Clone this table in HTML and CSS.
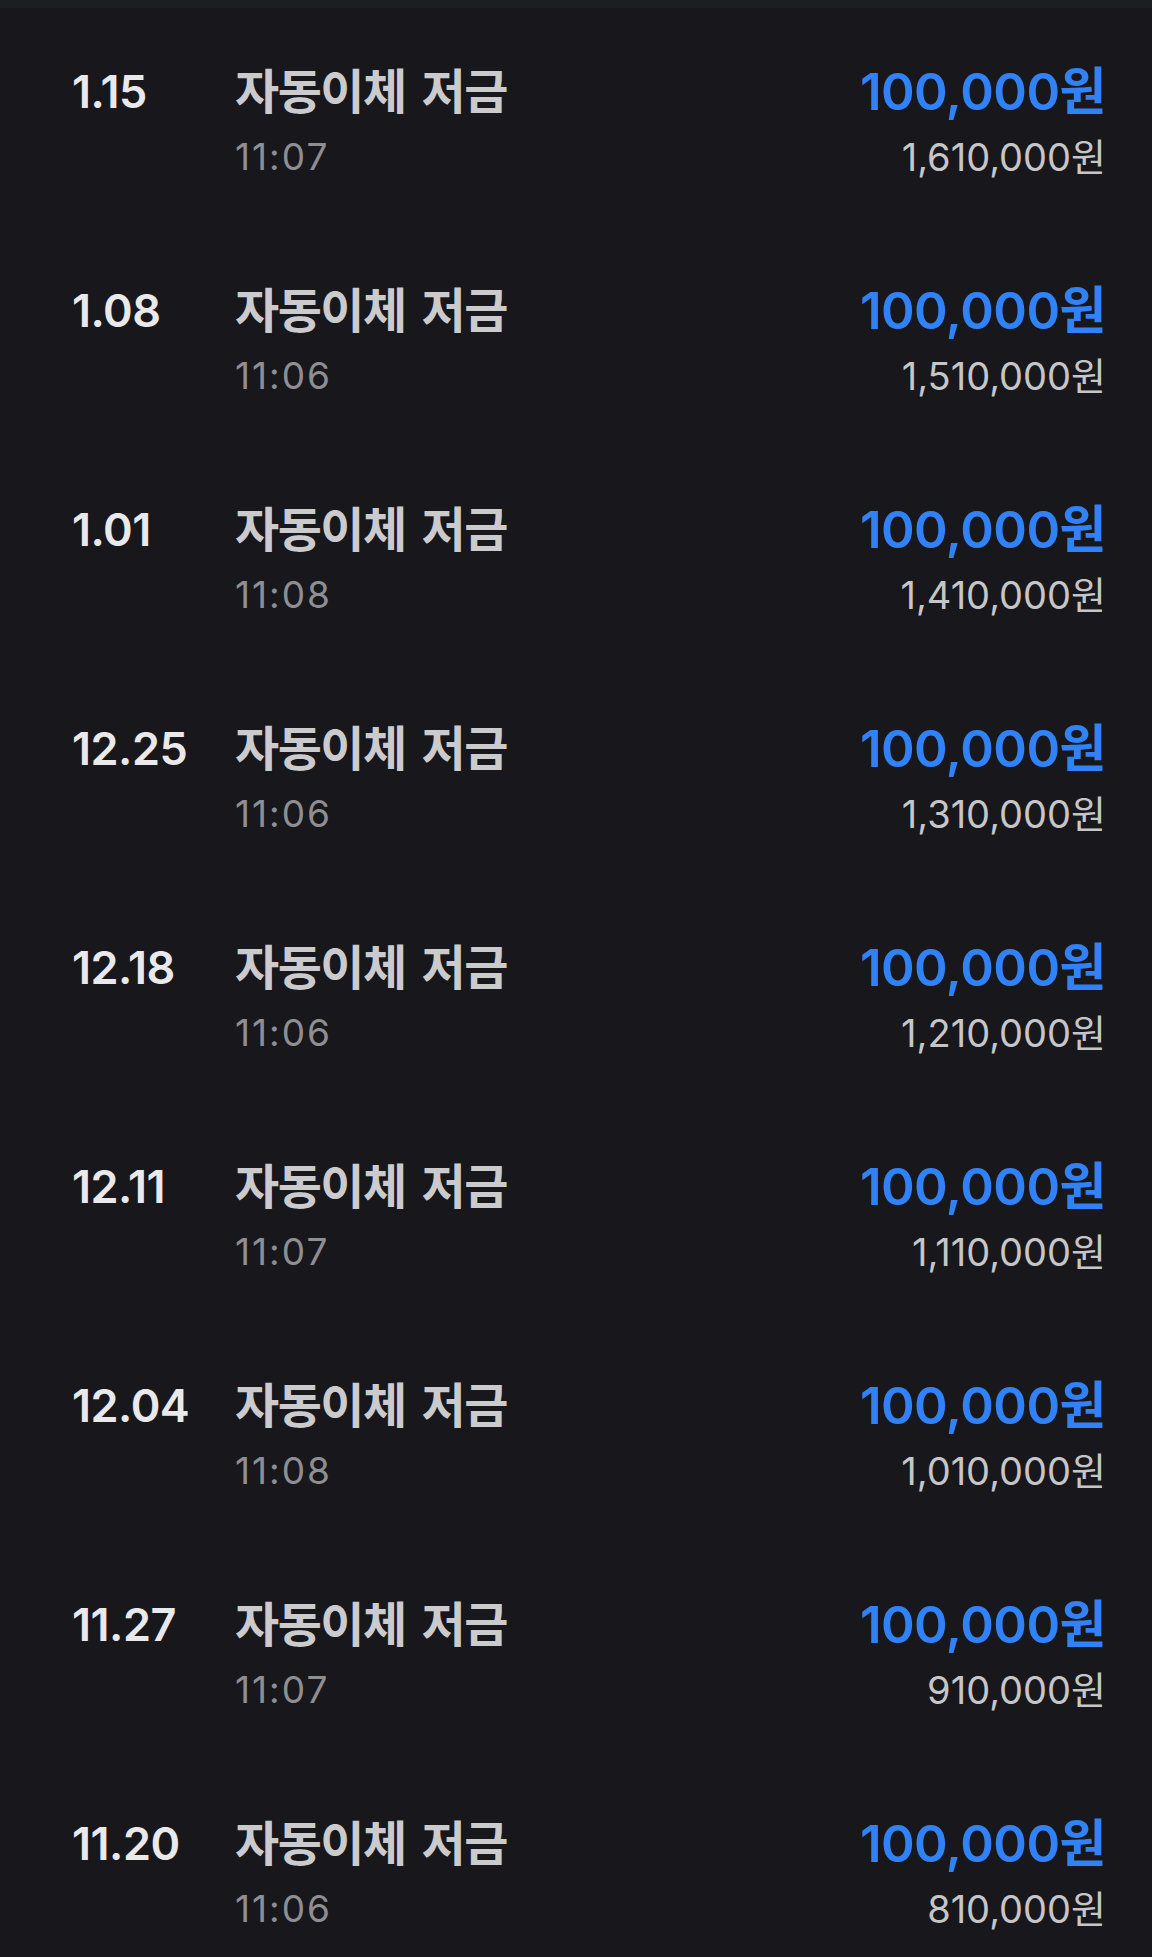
FILE: index.html
```html
<!DOCTYPE html>
<html lang="ko">
<head>
    <meta charset="UTF-8">
    <meta name="viewport" content="width=device-width, initial-scale=1.0">
    <title>저금 내역</title>
    <link rel="stylesheet" href="styles.css">
</head>
<body>
    <div class="topbar"></div>

    <ul class="history">
        <li class="row">
            <div class="date">1.15</div>
            <div class="info">
                <div class="title">자동이체 저금</div>
                <div class="time">11:07</div>
            </div>
            <div class="money">
                <div class="amount">100,000원</div>
                <div class="balance">1,610,000원</div>
            </div>
        </li>
        <li class="row">
            <div class="date">1.08</div>
            <div class="info">
                <div class="title">자동이체 저금</div>
                <div class="time">11:06</div>
            </div>
            <div class="money">
                <div class="amount">100,000원</div>
                <div class="balance">1,510,000원</div>
            </div>
        </li>
        <li class="row">
            <div class="date">1.01</div>
            <div class="info">
                <div class="title">자동이체 저금</div>
                <div class="time">11:08</div>
            </div>
            <div class="money">
                <div class="amount">100,000원</div>
                <div class="balance">1,410,000원</div>
            </div>
        </li>
        <li class="row">
            <div class="date">12.25</div>
            <div class="info">
                <div class="title">자동이체 저금</div>
                <div class="time">11:06</div>
            </div>
            <div class="money">
                <div class="amount">100,000원</div>
                <div class="balance">1,310,000원</div>
            </div>
        </li>
        <li class="row">
            <div class="date">12.18</div>
            <div class="info">
                <div class="title">자동이체 저금</div>
                <div class="time">11:06</div>
            </div>
            <div class="money">
                <div class="amount">100,000원</div>
                <div class="balance">1,210,000원</div>
            </div>
        </li>
        <li class="row">
            <div class="date">12.11</div>
            <div class="info">
                <div class="title">자동이체 저금</div>
                <div class="time">11:07</div>
            </div>
            <div class="money">
                <div class="amount">100,000원</div>
                <div class="balance">1,110,000원</div>
            </div>
        </li>
        <li class="row">
            <div class="date">12.04</div>
            <div class="info">
                <div class="title">자동이체 저금</div>
                <div class="time">11:08</div>
            </div>
            <div class="money">
                <div class="amount">100,000원</div>
                <div class="balance">1,010,000원</div>
            </div>
        </li>
        <li class="row">
            <div class="date">11.27</div>
            <div class="info">
                <div class="title">자동이체 저금</div>
                <div class="time">11:07</div>
            </div>
            <div class="money">
                <div class="amount">100,000원</div>
                <div class="balance">910,000원</div>
            </div>
        </li>
        <li class="row">
            <div class="date">11.20</div>
            <div class="info">
                <div class="title">자동이체 저금</div>
                <div class="time">11:06</div>
            </div>
            <div class="money">
                <div class="amount">100,000원</div>
                <div class="balance">810,000원</div>
            </div>
        </li>
    </ul>
</body>
</html>
```

FILE: styles.css
```css
body {
    margin: 0;
    background-color: #18181c;
    font-family: Inter, "Noto Sans CJK KR", sans-serif;
    overflow: hidden;
}
.topbar {
    height: 8px;
    background-color: #1d1e22;
}
.history {
    list-style: none;
    margin: 0;
    padding: 0;
}
.row {
    display: flex;
    align-items: flex-start;
    height: 219px;
    box-sizing: border-box;
    padding: 54px 46px 0 72px;
}
.date {
    width: 163px;
    flex-shrink: 0;
    font-size: 45px;
    line-height: 60px;
    font-weight: 600;
    letter-spacing: -0.5px;
    color: #e9e9eb;
}
.info {
    flex: 1;
}
.title {
    font-size: 48px;
    line-height: 60px;
    font-weight: 700;
    letter-spacing: -1.5px;
    word-spacing: 6px;
    color: #cbcbce;
}
.time {
    margin-top: 6px;
    font-size: 37px;
    line-height: 58px;
    letter-spacing: 2px;
    color: #8e8e93;
}
.money {
    text-align: right;
}
.amount {
    font-size: 51px;
    line-height: 60px;
    font-weight: 600;
    letter-spacing: -0.5px;
    color: #3182f6;
}
.balance {
    margin-top: 6px;
    font-size: 38px;
    line-height: 58px;
    letter-spacing: 0;
    color: #c6c6c9;
}
```
